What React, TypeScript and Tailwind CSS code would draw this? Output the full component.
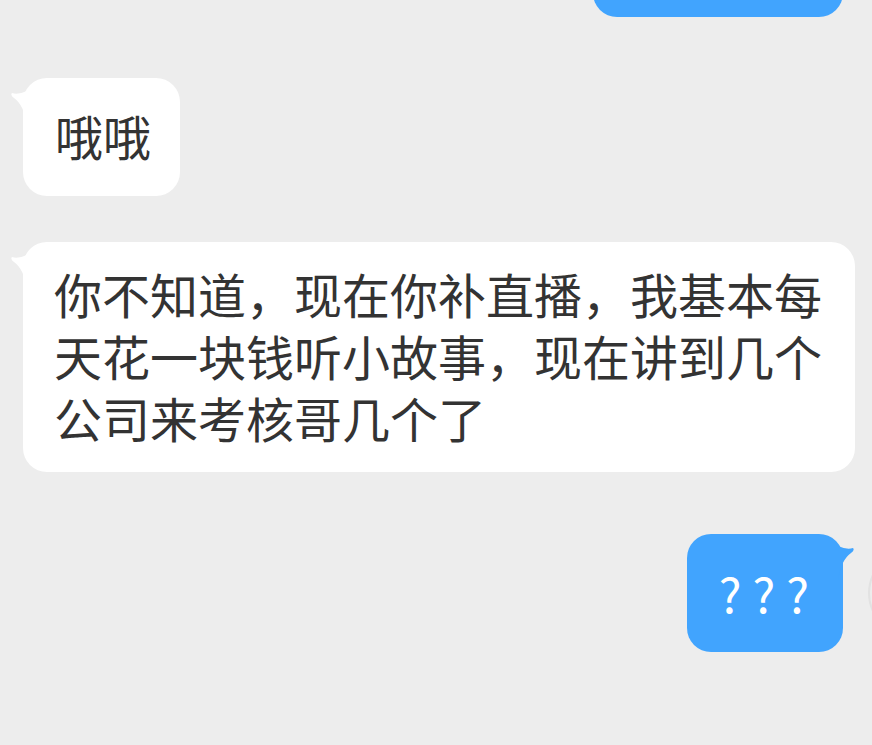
const bubbleText = "text-[48px] leading-[62px] text-[#333333]";

function LeftTail() {
  return (
    <svg className="absolute left-[-12px] top-[13px]" width="16" height="34" viewBox="0 0 16 34">
      <path d="M1 2 Q7 4 16 0 L16 34 Q13 14 3 7 Q-1 4 1 2 Z" fill="#ffffff" />
    </svg>
  );
}

function RightTail() {
  return (
    <svg className="absolute right-[-11px] top-[12px]" width="16" height="34" viewBox="0 0 16 34">
      <path d="M15 2 Q9 4 0 0 L0 34 Q3 14 13 7 Q17 4 15 2 Z" fill="#41a4fe" />
    </svg>
  );
}

export default function App() {
  return (
    <div
      className="w-[872px] h-[745px] overflow-hidden bg-[#ededed] flex flex-col"
      style={{ fontFamily: '"Noto Sans CJK SC", "Noto Sans", sans-serif' }}
    >
      {/* previous message, cut off at the top */}
      <div className="flex justify-end pr-[29px]">
        <div className="w-[250px] h-[80px] mt-[-63px] rounded-[24px] bg-[#41a4fe]" />
      </div>

      <div className="flex pl-[23px] mt-[61px]">
        <div className={`relative bg-white rounded-[24px] pl-[32px] pr-[29px] pt-[26px] pb-[30px] ${bubbleText}`}>
          <LeftTail />
          哦哦
        </div>
      </div>

      <div className="flex pl-[23px] mt-[46px]">
        <div className={`relative w-[832px] bg-white rounded-[24px] pl-[31px] pr-[29px] pt-[20px] pb-[24px] ${bubbleText}`}>
          <LeftTail />
          你不知道，现在你补直播，我基本每天花一块钱听小故事，现在讲到几个公司来考核哥几个了
        </div>
      </div>

      <div className="flex items-start mt-[62px]">
        <div className="ml-auto relative w-[156px] h-[118px] rounded-[24px] bg-[#41a4fe] flex items-center justify-center">
          <RightTail />
          <span className="text-[48px] leading-none text-white tracking-[11px] pl-[9px] pb-[2px]">???</span>
        </div>
        <div className="shrink-0 w-[84px] h-[84px] mt-[17px] ml-[25px] mr-[-80px] rounded-full border-2 border-[#e2e2e2]" />
      </div>
    </div>
  );
}
